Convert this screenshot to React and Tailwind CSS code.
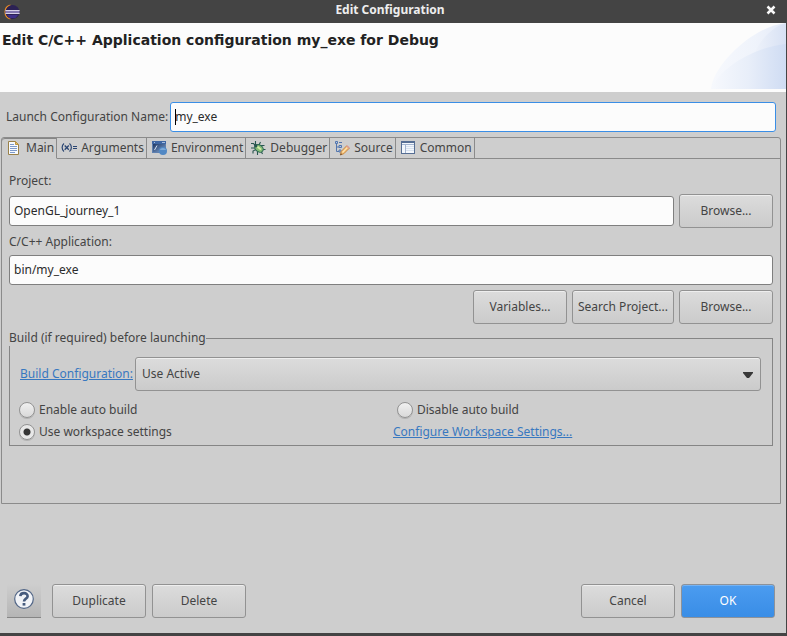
import React from "react";

const buttonBase =
  "h-[34px] rounded-[3px] border border-[#929292] bg-linear-to-b from-[#dcdcdc] to-[#cbcbcb] text-center whitespace-nowrap shadow-[inset_0_1px_0_#eeeeee]";
const fieldBase =
  "h-[30px] w-full rounded-[3px] border bg-[#fcfcfc] px-1 pb-0.5 text-[#2b2b2b] outline-none";

function Button({ children, className = "w-[94px]" }) {
  return (
    <button type="button" className={`${buttonBase} ${className}`}>
      {children}
    </button>
  );
}

function EclipseIcon() {
  return (
    <svg className="size-4" viewBox="0 0 16 16" aria-hidden="true">
      <path d="M6.5 1.2A7 7 0 0 0 6.5 14.8" fill="none" stroke="#ef8f24" strokeWidth="1.4" />
      <circle cx="8.5" cy="8" r="7" fill="#2c2255" />
      <path d="M3 11H14L11.5 14H5.5Z" fill="#3f3088" />
      <rect x="1.5" y="6" width="14" height="4" fill="#8478b2" />
      <path d="M1.5 6.5H15.5M1.5 9.5H15.5" stroke="#d6d0e6" strokeWidth="1" />
    </svg>
  );
}

function HeaderArt() {
  return (
    <svg className="absolute top-0 right-0 h-[66px] w-[75px]" viewBox="0 0 75 66" aria-hidden="true">
      <defs>
        <linearGradient id="swoosh" x1="0" x2="1" y1="0" y2="0">
          <stop offset="0" stopColor="#f7f9fd" />
          <stop offset="0.6" stopColor="#eff3fb" />
          <stop offset="1" stopColor="#e3eaf8" />
        </linearGradient>
        <linearGradient id="swooshUpper" x1="0" x2="1" y1="0" y2="0">
          <stop offset="0" stopColor="#eef2fa" />
          <stop offset="1" stopColor="#d7e1f4" />
        </linearGradient>
        <linearGradient id="swooshDeep" x1="0" x2="1" y1="0" y2="0">
          <stop offset="0" stopColor="#f7f9fd" />
          <stop offset="0.5" stopColor="#e8eef9" />
          <stop offset="1" stopColor="#cfdcf3" />
        </linearGradient>
      </defs>
      <path d="M0 66C2 42 42 3 75 0V66Z" fill="url(#swoosh)" />
      <path d="M44 30C49 17 61 4 75 0V30Z" fill="url(#swooshUpper)" />
      <path d="M0 66C9 44 44 24 75 21V66Z" fill="url(#swooshDeep)" />
    </svg>
  );
}

function PageIcon() {
  return (
    <svg className="size-4" viewBox="0 0 16 16" aria-hidden="true">
      <path d="M2.5 1.5H9.5L12.5 4.5V14.5H2.5Z" fill="#f8fbff" stroke="#9a8149" />
      <path d="M9.5 1.5V4.5H12.5Z" fill="#e5c46c" stroke="#b89243" />
      <path d="M4 4.5H8M4 6.5H11M4 8.5H11M4 10.5H11M4 12.5H9" stroke="#7d9acb" />
    </svg>
  );
}

function ArgumentsIcon() {
  return (
    <svg className="size-4" viewBox="0 0 16 16" fill="none" stroke="#2b4673" aria-hidden="true">
      <path d="M3 3.5C0.5 5.5 0.5 9.5 3 11.5M8.5 3.5C11 5.5 11 9.5 8.5 11.5" strokeWidth="1.2" />
      <path d="M3.7 5.5L7.8 9.7M7.8 5.5L3.7 9.7" strokeWidth="1.3" />
      <path d="M12 6.5H16M12 8.5H16" />
    </svg>
  );
}

function EnvironmentIcon() {
  return (
    <svg className="size-4" viewBox="0 0 16 16" aria-hidden="true">
      <defs>
        <linearGradient id="screen" x1="0" x2="1" y1="0" y2="1">
          <stop offset="0" stopColor="#1f3763" />
          <stop offset="1" stopColor="#7fa3d2" />
        </linearGradient>
      </defs>
      <rect x="1" y="1" width="14" height="12" fill="#5f80b0" />
      <rect x="1" y="1" width="14" height="3" fill="#3f66a3" />
      <path d="M3 2.5H4M11 2.5H14" stroke="#a8bfdf" />
      <rect x="2" y="4" width="12" height="8" fill="url(#screen)" />
      <path d="M3.5 10L6 5.5" stroke="#d9e5f5" />
      <circle cx="12" cy="11" r="4" fill="#5188c4" />
      <path d="M8.7 10C10 7.3 13.8 7.3 15.2 10Z" fill="#7faad8" />
    </svg>
  );
}

function BugIcon() {
  return (
    <svg className="size-4" viewBox="0 0 16 16" aria-hidden="true">
      <path
        d="M5.5 1V4.5M10.5 2L9 5M1 3.5H3.5L6 6M1 8H5M3 13.5V11L6 9.5M7.5 15V11M12.5 14L11 11M15.5 9.5H12M14.5 5.5H11"
        fill="none"
        stroke="#28554f"
        strokeWidth="1.1"
      />
      <ellipse cx="9" cy="8.4" rx="4.5" ry="3.4" transform="rotate(35 9 8.4)" fill="#86bd76" stroke="#286353" />
      <circle cx="5.7" cy="5.7" r="1.7" fill="#28554f" />
      <path d="M7.5 6.8L11 9.6" stroke="#d7eda9" strokeWidth="1.8" />
    </svg>
  );
}

function SourceIcon() {
  return (
    <svg className="size-4" viewBox="0 0 16 16" aria-hidden="true">
      <path d="M2.5 4V11.5H5M2.5 7H5" fill="none" stroke="#5376ae" />
      <path d="M1.5 1.5H3.5V3.5H1.5ZM5 5.5H7.5V7.5H5ZM5 10H7V12H5Z" fill="#b9cae5" stroke="#5376ae" />
      <path d="M5 2.5H8" stroke="#5376ae" />
      <path d="M6.3 15L7.3 11.3L12.7 5.8L15.3 8.2L9.8 13.7Z" fill="#f1bf78" stroke="#c98842" />
      <path d="M8.5 12.5L13.7 7.2" stroke="#ffe3ae" strokeWidth="1.2" />
      <path d="M12.7 5.8L15.3 8.2" stroke="#db9b91" strokeWidth="1.6" />
      <path d="M6 15.3L7 13.3L8.2 14.3Z" fill="#5b4837" />
    </svg>
  );
}

function TableIcon() {
  return (
    <svg className="size-4" viewBox="0 0 16 16" aria-hidden="true">
      <rect x="1.5" y="1.5" width="13" height="12" fill="#f3f7fc" stroke="#566e94" />
      <path d="M1 2H15" stroke="#566e94" strokeWidth="2" />
      <path d="M2 4.5H14M5.5 4V13" stroke="#a3b4cf" />
      <path d="M6 6.5H14M6 8.5H14M6 10.5H14" stroke="#d6e0ee" />
    </svg>
  );
}

const tabs = [
  { label: "Main", Icon: PageIcon },
  { label: "Arguments", Icon: ArgumentsIcon },
  { label: "Environment", Icon: EnvironmentIcon },
  { label: "Debugger", Icon: BugIcon },
  { label: "Source", Icon: SourceIcon },
  { label: "Common", Icon: TableIcon },
];

function Tab({ label, Icon, active }) {
  return (
    <button
      type="button"
      role="tab"
      aria-selected={active}
      className={`flex items-center gap-1 border-r border-b border-r-[#8b8b8b] pr-0.5 pl-1 leading-5 ${
        active
          ? "rounded-tl-[3px] border-b-transparent shadow-[inset_0_1px_0_#858585]"
          : "border-b-[#8b8b8b]"
      }`}
    >
      <Icon />
      {label}
    </button>
  );
}

function Radio({ label, checked = false }) {
  return (
    <label className="flex h-[22px] items-center gap-1">
      <input
        type="radio"
        name="build"
        defaultChecked={checked}
        className="size-4 appearance-none rounded-full border border-[#939393] bg-linear-to-b from-[#f0f0f0] to-[#d9d9d9] shadow-[0_1px_0_#b2b2b2] checked:bg-[radial-gradient(circle,#363636_0_3px,#e8e8e8_4px)]"
      />
      {label}
    </label>
  );
}

export default function App() {
  return (
    <div className="flex min-h-screen flex-col border-r border-b-[3px] border-[#444444] bg-[#cecece] font-['Noto_Sans',sans-serif] text-[12px] leading-4 text-[#444444]">
      <div className="flex h-[23px] items-center bg-[#444444] pr-2.5 pl-1 text-[#eeeeee]">
        <EclipseIcon />
        <h1 className="flex-1 pr-1.5 pb-1 text-center font-bold">Edit Configuration</h1>
        <button type="button" aria-label="Close" className="pb-1">
          <svg className="size-2.5" viewBox="0 0 10 10" aria-hidden="true">
            <path d="M1.5 1.5L8.5 8.5M8.5 1.5L1.5 8.5" stroke="#fafafa" strokeWidth="2.5" />
          </svg>
        </button>
      </div>

      <header className="relative h-[69px] bg-[#fcfcfc] px-0.5 pt-2">
        <HeaderArt />
        <h2 className="font-['DejaVu_Sans',sans-serif] text-[14px] leading-[18px] font-bold text-[#222222]">
          Edit C/C++ Application configuration my_exe for Debug
        </h2>
      </header>

      <div className="flex items-center gap-0.5 pt-2.5 pr-2.5 pl-1.5">
        <label htmlFor="config-name" className="whitespace-nowrap">
          Launch Configuration Name:
        </label>
        <div className="relative flex-1">
          <input id="config-name" defaultValue="my_exe" className={`${fieldBase} border-[#3a8ee6]`} />
          <span className="absolute top-[7px] left-[5px] h-4 w-px bg-black" />
        </div>
      </div>

      <section className="mt-[5px] mr-[5px] ml-px flex flex-1 flex-col rounded-t-[3px] border border-[#8b8b8b]">
        <div role="tablist" className="flex h-[21px]">
          {tabs.map((tab, index) => (
            <Tab key={tab.label} {...tab} active={index === 0} />
          ))}
          <div className="flex-1 border-b border-[#8b8b8b]" />
        </div>

        <div className="px-[7px] pt-3.5">
          <label htmlFor="project">Project:</label>
          <div className="mt-[5px] flex items-center gap-[5px]">
            <input id="project" defaultValue="OpenGL_journey_1" className={`${fieldBase} border-[#7f7f7f]`} />
            <Button className="w-[94px] shrink-0">Browse...</Button>
          </div>
          <label htmlFor="application" className="mt-1.5 block">
            C/C++ Application:
          </label>
          <input
            id="application"
            defaultValue="bin/my_exe"
            className={`${fieldBase} mt-[5px] block border-[#7f7f7f]`}
          />
          <div className="mt-[5px] flex justify-end gap-[5px]">
            <Button>Variables...</Button>
            <Button className="w-[102px]">Search Project...</Button>
            <Button>Browse...</Button>
          </div>

          <fieldset className="mt-1.5 border border-[#858585] px-[9px] pb-0.5">
            <legend className="-ml-2.5 bg-[#cecece]">Build (if required) before launching</legend>
            <div className="mt-[11px] flex items-center gap-0.5 pr-0.5 pl-px">
              <a href="#build-configuration" className="whitespace-nowrap text-[#3878c0] underline">
                Build Configuration:
              </a>
              <div className="relative flex-1">
                <select
                  aria-label="Build Configuration"
                  className={`${buttonBase} block w-full appearance-none pr-6 pl-1.5 text-left`}
                >
                  <option>Use Active</option>
                </select>
                <svg
                  className="pointer-events-none absolute top-[15px] right-2 h-1.5 w-2.5"
                  viewBox="0 0 10 6"
                  aria-hidden="true"
                >
                  <path d="M0 0H10V1L6 6H4L0 1Z" fill="#383838" />
                </svg>
              </div>
            </div>
            <div className="mt-2 grid grid-cols-2 gap-x-1">
              <Radio label="Enable auto build" />
              <div className="pl-1">
                <Radio label="Disable auto build" />
              </div>
              <Radio label="Use workspace settings" checked />
              <a href="#workspace-settings" className="self-center text-[#3878c0] underline">
                Configure Workspace Settings...
              </a>
            </div>
          </fieldset>
        </div>
      </section>

      <footer className="mt-20 mb-[15px] flex items-center gap-1.5 pr-[11px] pl-[7px]">
        <button
          type="button"
          aria-label="Help"
          className="mr-[5px] flex h-[34px] w-[34px] justify-center border-b border-[#858585] bg-linear-to-b from-[#cecece] to-[#b5b5b5] pt-[5px]"
        >
          <svg className="size-5" viewBox="0 0 20 20" aria-hidden="true">
            <circle cx="10" cy="10" r="9.3" fill="#f1f3f7" stroke="#526687" strokeWidth="1.2" />
            <path
              d="M6.3 7.2C6.6 3 13.8 3.2 13.6 7.3C13.4 9.8 10 9.6 10 12.6"
              fill="none"
              stroke="#465b7d"
              strokeWidth="2.6"
            />
            <rect x="8.6" y="14" width="2.8" height="2.6" fill="#465b7d" />
          </svg>
        </button>
        <Button>Duplicate</Button>
        <Button>Delete</Button>
        <div className="flex-1" />
        <Button>Cancel</Button>
        <button
          type="button"
          className="h-[34px] w-[94px] rounded-[3px] border border-[#8c929a] bg-linear-to-b from-[#4b9cf0] to-[#398de6] text-white shadow-[inset_0_1px_0_#75b3f4]"
        >
          OK
        </button>
      </footer>
    </div>
  );
}
